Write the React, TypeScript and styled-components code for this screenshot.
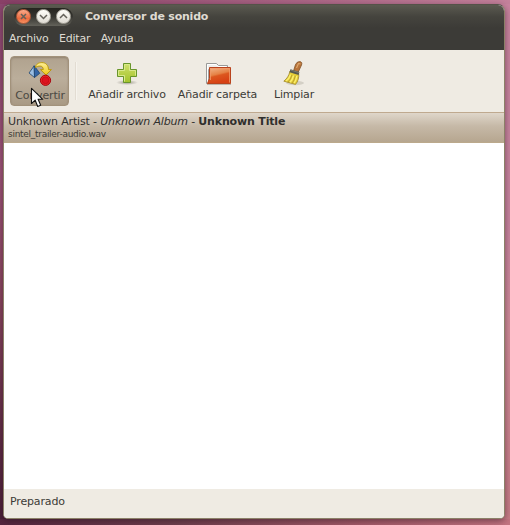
import React from 'react';
import styled, { createGlobalStyle, css } from 'styled-components';

const GlobalStyle = createGlobalStyle`
  * { box-sizing: border-box; }
  body { margin: 0; overflow: hidden; }
`;

const Desktop = styled.div`
  width: 510px;
  height: 525px;
  padding: 4px 5px 6px 3px;
  background:
    linear-gradient(to right, #55263f 0, #70404e 35%, #a45b69 70%, #c47582 100%) 0 519px / 510px 6px no-repeat,
    linear-gradient(to right, #8a4168 0, #a76182 50%, #c5829c 100%) 0 0 / 510px 4px no-repeat,
    linear-gradient(to bottom, #8d4871 0, #a0567a 170px, #8a465f 300px, #5c2a43 450px, #4b2038 525px) 0 0 / 255px 525px no-repeat,
    linear-gradient(to bottom, #c9849f 0, #c8849f 220px, #d08c98 330px, #c67b85 525px);
  font-family: 'DejaVu Sans', sans-serif;
  font-size: 11px;
  letter-spacing: -0.15px;
  color: #3c3b37;
`;

const Window = styled.main`
  width: 502px;
  height: 515px;
  display: flex;
  flex-direction: column;
  overflow: hidden;
  border: 1px solid #8b8168;
  border-top-color: #555249;
  border-radius: 7px 7px 5px 5px;
  background: #fff;
  box-shadow: 0 2px 7px rgba(35, 15, 25, 0.5);
`;

const TitleBar = styled.header`
  height: 23px;
  flex: none;
  display: flex;
  align-items: center;
  padding-left: 10px;
  background: linear-gradient(#5b5a50, #45443e 50%, #3c3b37);
`;

const WindowControls = styled.div`
  width: 59px;
  height: 18px;
  display: flex;
  align-items: center;
  gap: 5px;
  padding: 0 1px 0 1.5px;
  border-radius: 9px;
  background: linear-gradient(#25241f, #35342f 45%, #63625a);
`;

const ControlButton = styled.button<{ $close?: boolean }>`
  width: 15px;
  height: 15px;
  flex: none;
  padding: 0;
  border: 1px solid ${(p) => (p.$close ? '#b35a39' : '#aaa79e')};
  border-radius: 50%;
  background: ${(p) =>
    p.$close ? 'linear-gradient(#f9ab8c, #ee6b3e 65%, #f59262)' : 'linear-gradient(#fffefa, #dedbd3)'};
  svg { display: block; }
`;

const Title = styled.h1`
  margin: 1px 0 0 12px;
  font-size: 11px;
  line-height: 14px;
  letter-spacing: -0.21px;
  color: #dfdbd2;
  white-space: nowrap;
`;

const MenuBar = styled.nav`
  height: 22px;
  flex: none;
  display: flex;
  align-items: center;
  gap: 10.4px;
  padding: 0 5px 1px;
  background: #3c3b37;
  color: #dfdbd2;
  letter-spacing: -0.22px;
`;

const MenuItem = styled.span`
  line-height: 14px;
`;

const Toolbar = styled.div`
  height: 62px;
  flex: none;
  display: flex;
  align-items: flex-start;
  padding: 6px 6px 0;
  background: #efebe3;
`;

const ToolButton = styled.button<{ $width: number; $pressed?: boolean }>`
  width: ${(p) => p.$width}px;
  height: 50px;
  flex: none;
  display: flex;
  flex-direction: column;
  align-items: center;
  gap: 1px;
  padding: 4px 0 0;
  border: 1px solid transparent;
  border-radius: 4px;
  background: none;
  font: inherit;
  letter-spacing: inherit;
  color: #3c3b37;
  white-space: nowrap;
  svg { display: block; flex: none; }
  ${(p) =>
    p.$pressed &&
    css`
      padding: 5px 0 0 1px;
      border-color: #a2927b;
      background: linear-gradient(#b0a28e, #bbae9b 45%, #a99a85);
      box-shadow: inset 0 1px 2px rgba(90, 75, 55, 0.35);
      color: #4b4943;
    `}
`;

const ToolLabel = styled.span`
  height: 14px;
  line-height: 14px;
`;

const Separator = styled.div`
  width: 2px;
  height: 38px;
  margin: 6px 5px 0 6px;
  background: linear-gradient(90deg, #e2dcd2 50%, #f6f3ed 50%);
`;

const TrackList = styled.section`
  flex: 1;
  min-height: 0;
  background: #fff;
`;

const TrackRow = styled.article`
  height: 31px;
  padding: 2px 4px 0;
  border-top: 1px solid #bfa98f;
  border-bottom: 1px solid #bba98c;
  background: linear-gradient(#dfd6ca, #c6b9a7 45%, #b6a68f);
  color: #302f2d;
`;

const TrackName = styled.div`
  height: 13px;
  line-height: 13px;
  letter-spacing: -0.165px;
  white-space: nowrap;
`;

const FileName = styled.div`
  height: 12px;
  font-size: 9px;
  line-height: 12px;
  letter-spacing: -0.28px;
  color: #3c3b37;
`;

const StatusBar = styled.footer`
  height: 29px;
  flex: none;
  padding: 6px 6px 0;
  background: #efebe3;
  line-height: 14px;
`;

const PointerLayer = styled.div`
  position: absolute;
  left: 30px;
  top: 87px;
  pointer-events: none;
  svg { display: block; }
`;

function ControlGlyph({ path }: { path: string }) {
  return (
    <svg width="13" height="13" viewBox="0 0 13 13">
      <path d={path} fill="none" stroke="#64615a" strokeWidth="1.5" />
    </svg>
  );
}

function ConvertIcon() {
  return (
    <svg width="24" height="26" viewBox="0 0 24 26">
      <defs>
        <linearGradient id="yellowArrow" x2="0" y2="1">
          <stop stopColor="#fff09a" />
          <stop offset="1" stopColor="#edc816" />
        </linearGradient>
      </defs>
      <path d="M6.2 3.8 1 11l5.5 4.5Z" fill="#9bbfe2" stroke="#20456f" strokeWidth=".8" />
      <path d="m6.2 3.8 5.6 7.5-5.3 4.2Z" fill="#3465a4" stroke="#20456f" strokeWidth=".8" />
      <path d="M7.3 5.5C8 1.8 11 .6 13.8.6c4.1 0 6.6 2.7 6.7 7h2.9L18 13l-5.5-5.4h2.8C15.2 5.2 14 4.2 12.2 4.1c-1.8-.1-3.4.5-4.9 1.4Z" fill="url(#yellowArrow)" stroke="#b89500" strokeWidth=".9" strokeLinejoin="round" />
      <circle cx="17.5" cy="18.3" r="5.1" fill="#ef2929" stroke="#a3000a" />
      <circle cx="17.5" cy="18.3" r="3.4" fill="#dc1420" stroke="#bd0812" strokeWidth=".7" />
    </svg>
  );
}

function AddIcon() {
  return (
    <svg width="24" height="26" viewBox="0 0 24 26">
      <defs>
        <linearGradient id="greenCross" x2="0" y2="1">
          <stop stopColor="#d0e070" />
          <stop offset=".5" stopColor="#b9d14a" />
          <stop offset="1" stopColor="#a2c22c" />
        </linearGradient>
        <radialGradient id="crossShadow">
          <stop stopColor="#716d61" stopOpacity=".65" />
          <stop offset="1" stopColor="#716d61" stopOpacity="0" />
        </radialGradient>
      </defs>
      <ellipse cx="12" cy="21.5" rx="11" ry="2.6" fill="url(#crossShadow)" />
      <path d="M8.5 2.5h7v6h6v7h-6v6h-7v-6h-6v-7h6Z" fill="url(#greenCross)" stroke="#68952b" />
      <path d="M9.5 20.5v-6h-6v-5h6v-6h5v6h6v5" fill="none" stroke="#d8e98a" />
    </svg>
  );
}

function FolderIcon() {
  return (
    <svg width="26" height="26" viewBox="0 0 26 26">
      <defs>
        <linearGradient id="orangeFolder" x2=".35" y2="1">
          <stop stopColor="#f3ba91" />
          <stop offset=".5" stopColor="#e58245" />
          <stop offset=".6" stopColor="#dc571f" />
          <stop offset="1" stopColor="#d74114" />
        </linearGradient>
      </defs>
      <path d="M1.5 22.5v-20h10l2 2h9v18Z" fill="#eeeeec" stroke="#9a9a98" />
      <path d="M2.5 21V3.5H11l2 2h8.5" fill="none" stroke="#fff" />
      <path d="M3.5 21V8.5h2V6.5h6" fill="none" stroke="#a3a3a1" />
      <path d="M4.5 6.5h21v16h-23l2-5Z" fill="url(#orangeFolder)" stroke="#b9431d" />
      <path d="M5.5 19V7.5h19v14" fill="none" stroke="#f09a69" strokeOpacity=".8" />
      <path d="M2 23.5h24" stroke="#bdb5ab" />
    </svg>
  );
}

function BroomIcon() {
  return (
    <svg width="24" height="26" viewBox="0 0 24 26">
      <ellipse cx="13" cy="22" rx="9" ry="2.2" fill="#a49d8e" opacity=".35" />
      <path d="m11.5 10 2-6.5Q15 .5 17.5.6q3.2.2 2 3.4L16.3 11Z" fill="#b9743b" stroke="#805026" strokeWidth=".8" />
      <path d="m14.5 7 2-4.5 2 .5" fill="none" stroke="#dda66c" strokeWidth="1.2" />
      <path d="m8 10 8.7 2.5c.5 4.1-.8 8.2-3.2 10.9L1.8 20.2C5 17.5 7 14.8 8 10Z" fill="#e7ce36" stroke="#9e862b" strokeWidth=".8" />
      <path d="M8.5 13.5q-1.3 4.5-4.5 6.5m7.5-5.5q-1 4.5-3.5 6.8m6.7-6.3q-.5 4.2-2.5 7" fill="none" stroke="#fbef70" strokeWidth="1.3" />
      <path d="M10 14q-1.3 4.5-4 7m7.3-6.2q-.8 4.2-3 7.2" fill="none" stroke="#a99029" strokeWidth=".7" />
      <path d="m8 9.8 9 2.8" stroke="#555850" strokeWidth="3.1" />
      <path d="m9 9.2 8 2.5" stroke="#85877b" strokeWidth=".8" />
    </svg>
  );
}

function Pointer() {
  return (
    <PointerLayer>
      <svg width="14" height="22" viewBox="0 0 14 22">
        <path d="M1.5 1.3v15.2l3.7-3.3 2.5 6.3 3-1.2-2.6-6h4.7Z" fill="#fff" stroke="#111" strokeWidth="1.1" strokeLinejoin="round" />
      </svg>
    </PointerLayer>
  );
}

export default function App() {
  return (
    <Desktop>
      <GlobalStyle />
      <Window>
        <TitleBar>
          <WindowControls>
            <ControlButton $close aria-label="Cerrar"><ControlGlyph path="m4 4 5 5m0-5-5 5" /></ControlButton>
            <ControlButton aria-label="Minimizar"><ControlGlyph path="m3 5 3.5 3.5L10 5" /></ControlButton>
            <ControlButton aria-label="Maximizar"><ControlGlyph path="m3 8 3.5-3.5L10 8" /></ControlButton>
          </WindowControls>
          <Title>Conversor de sonido</Title>
        </TitleBar>
        <MenuBar>
          <MenuItem>Archivo</MenuItem>
          <MenuItem>Editar</MenuItem>
          <MenuItem>Ayuda</MenuItem>
        </MenuBar>
        <Toolbar>
          <ToolButton $width={59} $pressed><ConvertIcon /><ToolLabel>Convertir</ToolLabel></ToolButton>
          <Separator />
          <ToolButton $width={90}><AddIcon /><ToolLabel>Añadir archivo</ToolLabel></ToolButton>
          <ToolButton $width={91}><FolderIcon /><ToolLabel>Añadir carpeta</ToolLabel></ToolButton>
          <ToolButton $width={62}><BroomIcon /><ToolLabel>Limpiar</ToolLabel></ToolButton>
        </Toolbar>
        <TrackList>
          <TrackRow>
            <TrackName>Unknown Artist - <i>Unknown Album</i> - <b>Unknown Title</b></TrackName>
            <FileName>sintel_trailer-audio.wav</FileName>
          </TrackRow>
        </TrackList>
        <StatusBar>Preparado</StatusBar>
      </Window>
      <Pointer />
    </Desktop>
  );
}
